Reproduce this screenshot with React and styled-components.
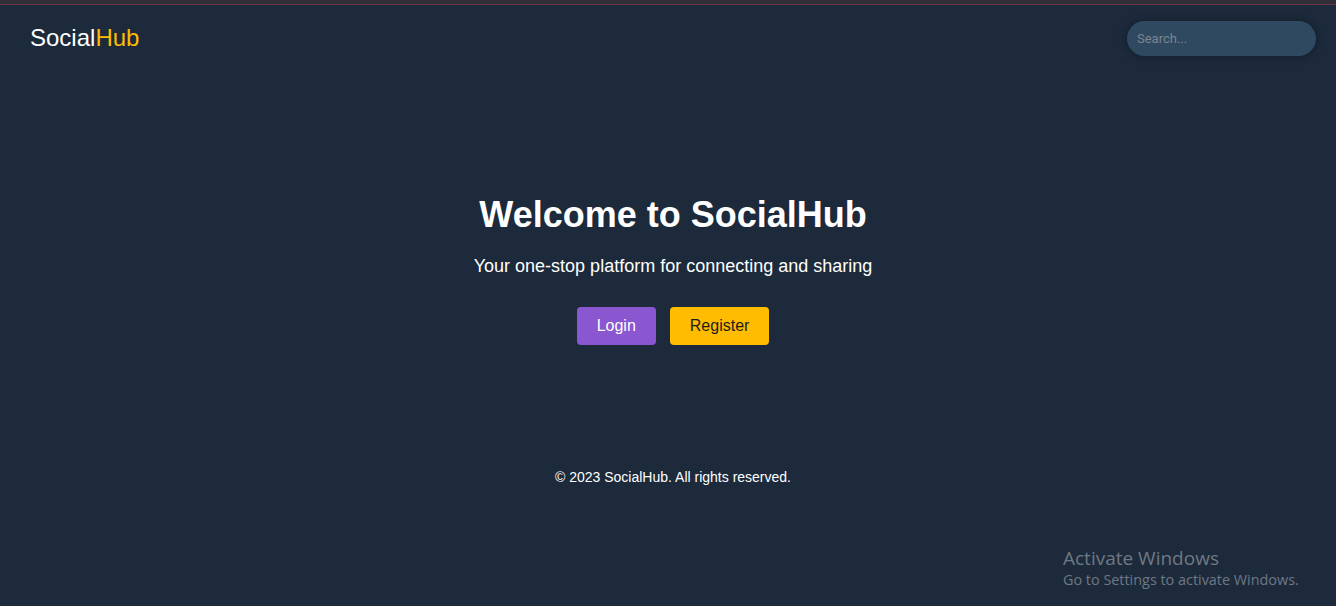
import React from "react";
import styled, { createGlobalStyle } from "styled-components";

const GlobalStyle = createGlobalStyle`
    html, body {
        margin: 0;
        padding: 0;
        background-color: #1c2a3c;
        font-family: "Liberation Sans", Arial, sans-serif;
        color: #ffffff;
    }
`;

const Page = styled.div`
    position: relative;
    min-height: 606px;
    background-color: #1c2a3c;
`;

const BrowserEdge = styled.div`
    height: 4px;
    background-color: #302e38;
    border-bottom: 1px solid #6e3446;
`;

const Header = styled.header`
    display: flex;
    justify-content: space-between;
    align-items: center;
    padding: 15px 20px 0 30px;
    height: 36px;
`;

const Logo = styled.div`
    font-size: 24px;
    color: #ffffff;
    & span {
        color: #ffbb00;
    }
`;

const SearchInput = styled.input`
    width: 189px;
    height: 35px;
    box-sizing: border-box;
    border: none;
    border-radius: 18px;
    padding: 0 10px;
    background-color: #2f4a60;
    color: #ffffff;
    font-family: Roboto, "Liberation Sans", sans-serif;
    font-size: 13px;
    box-shadow: 0 0 8px rgba(0, 0, 0, 0.35);
    outline: none;
    &::placeholder {
        color: #7b8590;
    }
`;

const Hero = styled.main`
    display: flex;
    flex-direction: column;
    align-items: center;
    padding: 138px 0 0 10px;
`;

const Title = styled.h1`
    margin: 0 0 20px;
    font-size: 36px;
    line-height: 42px;
    font-weight: bold;
`;

const Subtitle = styled.p`
    margin: 0 0 30px;
    font-size: 18px;
    line-height: 21px;
`;

const ButtonRow = styled.div`
    display: flex;
    gap: 14px;
`;

const Button = styled.button`
    height: 38px;
    padding: 0 20px;
    border: none;
    border-radius: 4px;
    font-family: "Liberation Sans", Arial, sans-serif;
    font-size: 16px;
    cursor: pointer;
    background-color: ${(p) => (p.$variant === "primary" ? "#8a57d0" : "#ffbc00")};
    color: ${(p) => (p.$variant === "primary" ? "#ffffff" : "#1c1c1c")};
`;

const Footer = styled.footer`
    margin-top: 124px;
    padding-left: 10px;
    text-align: center;
    font-size: 14px;
    line-height: 16px;
`;

const Watermark = styled.div`
    position: absolute;
    left: 1063px;
    top: 545px;
    color: #6f7882;
    font-family: "Open Sans", "Noto Sans", sans-serif;
    & div:first-child {
        font-size: 19px;
        line-height: 26px;
    }
    & div:last-child {
        font-size: 14.4px;
        line-height: 18px;
    }
`;

const App = () => {
    return (
        <Page>
            <GlobalStyle />
            <BrowserEdge />
            <Header>
                <Logo>
                    Social<span>Hub</span>
                </Logo>
                <SearchInput type="text" placeholder="Search..." />
            </Header>

            <Hero>
                <Title>Welcome to SocialHub</Title>
                <Subtitle>Your one-stop platform for connecting and sharing</Subtitle>
                <ButtonRow>
                    <Button $variant="primary">Login</Button>
                    <Button $variant="secondary">Register</Button>
                </ButtonRow>
            </Hero>

            <Footer>© 2023 SocialHub. All rights reserved.</Footer>

            <Watermark>
                <div>Activate Windows</div>
                <div>Go to Settings to activate Windows.</div>
            </Watermark>
        </Page>
    );
};

export default App;
